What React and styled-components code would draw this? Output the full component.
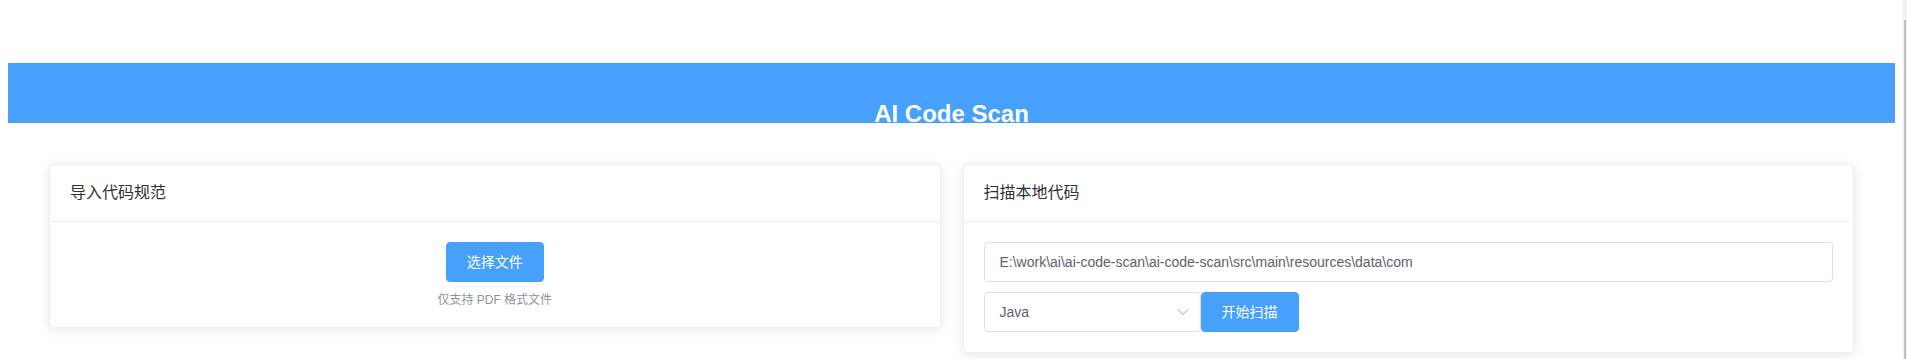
import React from "react";
import styled, { createGlobalStyle } from "styled-components";

const BLUE = "#46a0fc";

const GlobalStyle = createGlobalStyle`
  html, body {
    margin: 0;
    padding: 0;
    overflow: hidden;
    background: #fff;
  }
  body {
    font-family: "Liberation Sans", "Noto Sans CJK SC", Arial, sans-serif;
    color: #303133;
  }
  * { box-sizing: border-box; }
`;

const Shell = styled.div`
  display: flex;
  height: 100vh;
  width: 100%;
`;

const Page = styled.div`
  flex: 1;
  min-width: 0;
  padding: 63px 8px 0 8px;
`;

const ScrollTrack = styled.div`
  width: 4px;
  height: 100%;
  background: #f1f1f1;
  display: flex;
  flex-direction: column;
`;

const ScrollArrow = styled.div`
  height: 20px;
  background: #f1f1f1;
`;

const ScrollThumb = styled.div`
  flex: 1;
  margin-left: 1px;
  width: 2px;
  background: #c1c1c1;
`;

const Banner = styled.header`
  height: 60px;
  background: ${BLUE};
  text-align: center;
`;

const Title = styled.h2`
  margin: 0;
  padding-top: 37px;
  font-size: 24px;
  line-height: 28px;
  font-weight: 700;
  color: #fff;
`;

const CardGrid = styled.main`
  display: grid;
  grid-template-columns: 1fr 1fr;
  gap: 22px;
  align-items: start;
  padding: 41px 41px 0 41px;
`;

const Card = styled.section`
  background: #fff;
  border: 1px solid #ebeef5;
  border-radius: 4px;
  box-shadow: 0 2px 12px 0 rgba(0, 0, 0, 0.1);
  overflow: hidden;
  color: #303133;
`;

const CardHeader = styled.div`
  padding: 18px 20px;
  border-bottom: 1px solid #ebeef5;
  font-size: 16px;
  line-height: 20px;
`;

const CardBody = styled.div`
  padding: 20px 20px ${(p) => (p.$center ? "18px" : "20px")};
  display: flex;
  flex-direction: column;
  align-items: ${(p) => (p.$center ? "center" : "stretch")};
  gap: ${(p) => (p.$gap ? `${p.$gap}px` : "0")};
`;

const PrimaryButton = styled.button`
  height: 40px;
  padding: 0 20px;
  border: 1px solid ${BLUE};
  border-radius: 4px;
  background: ${BLUE};
  color: #fff;
  font-family: inherit;
  font-size: 14px;
  line-height: 1;
  cursor: pointer;
  white-space: nowrap;
  flex: none;
  width: ${(p) => (p.$width ? `${p.$width}px` : "auto")};
`;

const Tip = styled.div`
  margin-top: 9px;
  font-size: 12px;
  line-height: 18px;
  color: #909399;
`;

const TextInput = styled.input`
  display: block;
  width: 100%;
  height: 40px;
  padding: 0 15px;
  border: 1px solid #dcdfe6;
  border-radius: 4px;
  font-family: inherit;
  font-size: 14px;
  color: #606266;
  background: #fff;
  outline: none;
`;

const ControlRow = styled.div`
  display: flex;
  align-items: center;
`;

const SelectBox = styled.div`
  width: 217px;
  height: 40px;
  padding: 0 11px 0 15px;
  border: 1px solid #dcdfe6;
  border-radius: 4px;
  display: flex;
  align-items: center;
  justify-content: space-between;
  font-size: 14px;
  color: #606266;
  background: #fff;
  flex: none;
`;

const Chevron = () => (
  <svg width="12" height="8" viewBox="0 0 12 8" fill="none">
    <polyline
      points="1,1.5 6,6.5 11,1.5"
      stroke="#c0c4cc"
      strokeWidth="1.1"
      fill="none"
    />
  </svg>
);

export default function App() {
  return (
    <>
      <GlobalStyle />
      <Shell>
        <Page>
          <Banner>
            <Title>AI Code Scan</Title>
          </Banner>
          <CardGrid>
            <Card>
              <CardHeader>导入代码规范</CardHeader>
              <CardBody $center>
                <PrimaryButton $width={98}>选择文件</PrimaryButton>
                <Tip>仅支持 PDF 格式文件</Tip>
              </CardBody>
            </Card>
            <Card>
              <CardHeader>扫描本地代码</CardHeader>
              <CardBody $gap={10}>
                <TextInput
                  readOnly
                  value="E:\work\ai\ai-code-scan\ai-code-scan\src\main\resources\data\com"
                />
                <ControlRow>
                  <SelectBox>
                    <span>Java</span>
                    <Chevron />
                  </SelectBox>
                  <PrimaryButton $width={98}>开始扫描</PrimaryButton>
                </ControlRow>
              </CardBody>
            </Card>
          </CardGrid>
        </Page>
        <ScrollTrack>
          <ScrollArrow />
          <ScrollThumb />
        </ScrollTrack>
      </Shell>
    </>
  );
}
